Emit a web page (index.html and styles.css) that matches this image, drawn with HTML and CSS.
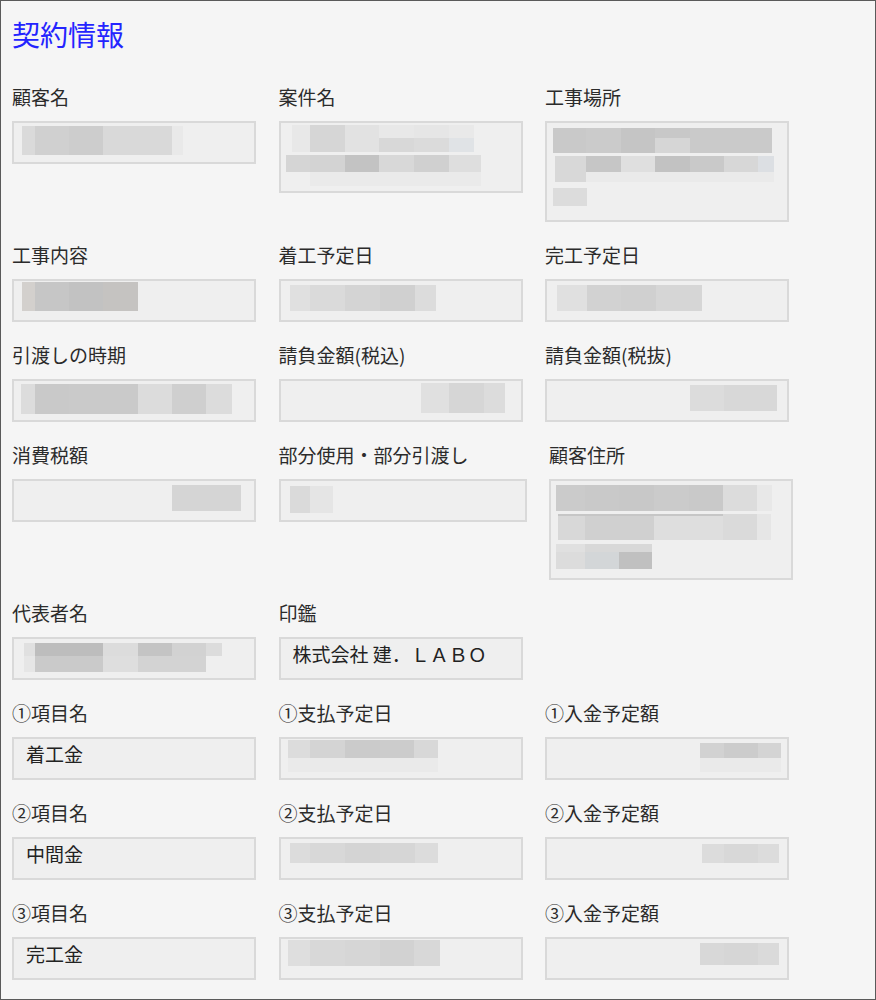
FILE: index.html
```html
<!DOCTYPE html>
<html lang="ja">
<head>
    <meta charset="UTF-8">
    <title>契約情報</title>
    <link rel="stylesheet" href="styles.css">
</head>
<body>
<div class="page">
    <h1 class="title">契約情報</h1>

    <div class="rows">
        <div class="row">
            <div class="field">
                <div class="label">顧客名</div>
                <div class="box">
                    <div class="mz blur-customer"></div>
                </div>
            </div>
            <div class="field">
                <div class="label">案件名</div>
                <div class="box mid">
                    <div class="mz blur-project-a"></div>
                    <div class="mz blur-project-b"></div>
                    <div class="mz blur-project-c"></div>
                </div>
            </div>
            <div class="field">
                <div class="label">工事場所</div>
                <div class="box tall">
                    <div class="mz blur-site-a"></div>
                    <div class="mz blur-site-b"></div>
                    <div class="mz blur-site-b2"></div>
                    <div class="mz blur-site-c"></div>
                </div>
            </div>
        </div>

        <div class="row">
            <div class="field">
                <div class="label">工事内容</div>
                <div class="box">
                    <div class="mz blur-work"></div>
                </div>
            </div>
            <div class="field">
                <div class="label">着工予定日</div>
                <div class="box">
                    <div class="mz blur-start"></div>
                </div>
            </div>
            <div class="field">
                <div class="label">完工予定日</div>
                <div class="box">
                    <div class="mz blur-finish"></div>
                </div>
            </div>
        </div>

        <div class="row">
            <div class="field">
                <div class="label">引渡しの時期</div>
                <div class="box">
                    <div class="mz blur-handover"></div>
                </div>
            </div>
            <div class="field">
                <div class="label">請負金額(税込)</div>
                <div class="box">
                    <div class="mz blur-total-in"></div>
                </div>
            </div>
            <div class="field">
                <div class="label">請負金額(税抜)</div>
                <div class="box">
                    <div class="mz blur-total-ex"></div>
                </div>
            </div>
        </div>

        <div class="row">
            <div class="field">
                <div class="label">消費税額</div>
                <div class="box">
                    <div class="mz blur-tax"></div>
                </div>
            </div>
            <div class="field wide">
                <div class="label">部分使用・部分引渡し</div>
                <div class="box">
                    <div class="mz blur-partial"></div>
                </div>
            </div>
            <div class="field">
                <div class="label">顧客住所</div>
                <div class="box tall">
                    <div class="mz blur-addr-a"></div>
                    <div class="mz blur-addr-b"></div>
                    <div class="mz blur-addr-c"></div>
                </div>
            </div>
        </div>

        <div class="row">
            <div class="field">
                <div class="label">代表者名</div>
                <div class="box">
                    <div class="mz blur-rep-a"></div>
                    <div class="mz blur-rep-b"></div>
                </div>
            </div>
            <div class="field">
                <div class="label">印鑑</div>
                <div class="box">
                    <div class="val">株式会社 建．ＬＡＢＯ</div>
                </div>
            </div>
        </div>

        <div class="row">
            <div class="field">
                <div class="label">①項目名</div>
                <div class="box">
                    <div class="val">着工金</div>
                </div>
            </div>
            <div class="field">
                <div class="label">①支払予定日</div>
                <div class="box">
                    <div class="mz blur-pay1-a"></div>
                    <div class="mz blur-pay1-b"></div>
                </div>
            </div>
            <div class="field">
                <div class="label">①入金予定額</div>
                <div class="box">
                    <div class="mz blur-amt1-a"></div>
                    <div class="mz blur-amt1-b"></div>
                </div>
            </div>
        </div>

        <div class="row">
            <div class="field">
                <div class="label">②項目名</div>
                <div class="box">
                    <div class="val">中間金</div>
                </div>
            </div>
            <div class="field">
                <div class="label">②支払予定日</div>
                <div class="box">
                    <div class="mz blur-pay2"></div>
                </div>
            </div>
            <div class="field">
                <div class="label">②入金予定額</div>
                <div class="box">
                    <div class="mz blur-amt2"></div>
                </div>
            </div>
        </div>

        <div class="row">
            <div class="field">
                <div class="label">③項目名</div>
                <div class="box">
                    <div class="val">完工金</div>
                </div>
            </div>
            <div class="field">
                <div class="label">③支払予定日</div>
                <div class="box">
                    <div class="mz blur-pay3"></div>
                </div>
            </div>
            <div class="field">
                <div class="label">③入金予定額</div>
                <div class="box">
                    <div class="mz blur-amt3"></div>
                </div>
            </div>
        </div>
    </div>
</div>
</body>
</html>
```

FILE: styles.css
```css
body {
    margin: 0;
    font-family: "Noto Sans CJK JP", "Noto Sans", sans-serif;
    color: #2b2b2b;
}
.page {
    box-sizing: border-box;
    width: 876px;
    height: 1000px;
    border: 1px solid #5a5a5a;
    background: #f5f5f5;
    padding: 15px 0 0 11px;
}
.title {
    margin: 0 0 33px;
    font-size: 28px;
    line-height: 36px;
    font-weight: normal;
    color: #2424ff;
}
.rows {
    display: flex;
    flex-direction: column;
    gap: 21px;
}
.row {
    display: flex;
    align-items: flex-start;
    gap: 22.5px;
}
.field {
    width: 244px;
}
.field.wide {
    width: 248px;
}
.label {
    font-size: 19px;
    line-height: 24px;
    margin-bottom: 12px;
    white-space: nowrap;
}
.box {
    box-sizing: border-box;
    height: 43px;
    border: 2px solid #d9d9d9;
    background: #efefef;
    overflow: hidden;
}
.box.mid {
    height: 72px;
}
.box.tall {
    height: 101px;
}
.val {
    padding: 3px 12px 0;
    font-size: 19px;
    line-height: 24px;
    color: #222;
    white-space: nowrap;
}

/* mosaic (blurred personal data) */
.mz {
    display: block;
}
.blur-customer {
    margin: 3px 0 0 8px; width: 161px; height: 29px;
    background: linear-gradient(90deg, #dadada 0 13px, #d0d0d0 13px 47px, #cdcdcd 47px 81px, #d9d9d9 81px 150px, #e9e9e9 150px 161px);
}
.blur-project-a {
    margin: 2px 0 0 11px; width: 182px; height: 27px;
    background:
        linear-gradient(90deg, #e8e8e8 0 18px, #d6d6d6 18px 53px, #e2e2e2 53px 87px, #e8e8e8 87px 122px, #e6e6e6 122px 157px, #e9e9e9 157px 182px) top / 100% 13px no-repeat,
        linear-gradient(90deg, #e8e8e8 0 18px, #d6d6d6 18px 53px, #e2e2e2 53px 87px, #d8d8d8 87px 122px, #dbdbdb 122px 157px, #e0e3e6 157px 182px);
}
.blur-project-b {
    margin: 3px 0 0 5px; width: 195px; height: 17px;
    background: linear-gradient(90deg, #d5d5d5 0 24px, #d3d3d3 24px 59px, #c3c3c3 59px 93px, #d8d8d8 93px 128px, #d0d0d0 128px 163px, #dedede 163px 195px);
}
.blur-project-c {
    margin-left: 29px; width: 171px; height: 14px;
    background: #eaeaea;
}
.blur-site-a {
    margin: 5px 0 0 6px; width: 219px; height: 25px;
    background:
        linear-gradient(90deg, #c9c9c9 0 33px, #cbcbcb 33px 68px, #c5c5c5 68px 102px, #c8c8c8 102px 137px, #cacaca 137px 219px) top / 100% 10px no-repeat,
        linear-gradient(90deg, #c9c9c9 0 33px, #cbcbcb 33px 68px, #c5c5c5 68px 102px, #d6d6d6 102px 137px, #cacaca 137px 219px);
}
.blur-site-b {
    margin: 3px 0 0 8px; width: 219px; height: 16px;
    background: linear-gradient(90deg, #d8d8d8 0 31px, #c6c6c6 31px 66px, #dfdfdf 66px 100px, #c2c2c2 100px 135px, #c9c9c9 135px 169px, #d7d7d7 169px 203px, #dcdfe3 203px 219px);
}
.blur-site-b2 {
    margin-left: 8px; width: 219px; height: 10px;
    background: linear-gradient(90deg, #d8d8d8 0 31px, #eaeaea 31px 219px);
}
.blur-site-c {
    margin: 6px 0 0 6px; width: 34px; height: 18px;
    background: #dcdcdc;
}
.blur-work {
    margin: 1px 0 0 8px; width: 116px; height: 29px;
    background: linear-gradient(90deg, #d3d0cd 0 13px, #c6c6c6 13px 47px, #c2c2c2 47px 81px, #c5c3c1 81px 116px);
}
.blur-start {
    margin: 4px 0 0 9px; width: 146px; height: 26px;
    background: linear-gradient(90deg, #e0e0e0 0 20px, #dadada 20px 55px, #d4d4d4 55px 90px, #d0d0d0 90px 125px, #dcdcdc 125px 146px);
}
.blur-finish {
    margin: 4px 0 0 10px; width: 145px; height: 26px;
    background: linear-gradient(90deg, #e0e0e0 0 30px, #d2d2d2 30px 64px, #d0d0d0 64px 99px, #d6d6d6 99px 145px);
}
.blur-handover {
    margin: 3px 0 0 7px; width: 211px; height: 30px;
    background: linear-gradient(90deg, #dcdcdc 0 14px, #c9c9c9 14px 48px, #cacaca 48px 117px, #dcdcdc 117px 151px, #cfcfcf 151px 185px, #dcdcdc 185px 211px);
}
.blur-total-in {
    margin: 2px 0 0 140px; width: 84px; height: 30px;
    background: linear-gradient(90deg, #e0e0e0 0 28px, #d6d6d6 28px 63px, #dcdcdc 63px 84px);
}
.blur-total-ex {
    margin: 4px 0 0 143px; width: 87px; height: 26px;
    background: linear-gradient(90deg, #dcdcdc 0 34px, #d8d8d8 34px 87px);
}
.blur-tax {
    margin: 4px 0 0 158px; width: 69px; height: 26px;
    background: #d5d5d5;
}
.blur-partial {
    margin: 5px 0 0 9px; width: 43px; height: 27px;
    background: linear-gradient(90deg, #dadada 0 20px, #e5e5e5 20px 43px);
}
.blur-addr-a {
    margin: 4px 0 0 5px; width: 216px; height: 26px;
    background: linear-gradient(90deg, #cbcbcb 0 29px, #c9c9c9 29px 63px, #c8c8c8 63px 98px, #cbcbcb 98px 133px, #c9c9c9 133px 167px, #dcdcdc 167px 201px, #e8e8e8 201px 216px);
}
.blur-addr-b {
    margin: 3px 0 0 7px; width: 213px; height: 26px;
    background:
        linear-gradient(90deg, #c6c6c6 0 165px, transparent 165px) top / 100% 2px no-repeat,
        linear-gradient(90deg, #d8d8d8 0 27px, #d0d0d0 27px 96px, #dedede 96px 165px, #dadada 165px 199px, #e6e6e6 199px 213px);
}
.blur-addr-c {
    margin: 4px 0 0 5px; width: 96px; height: 25px;
    background:
        linear-gradient(90deg, #e0e0e0 0 29px, #d8d8d8 29px 96px) top / 100% 8px no-repeat,
        linear-gradient(90deg, #dcdcdc 0 29px, #d3d6d8 29px 63px, #c0c0c0 63px 96px);
}
.blur-rep-a {
    margin: 4px 0 0 10px; width: 198px; height: 13px;
    background: linear-gradient(90deg, #e0e0e0 0 11px, #bdbdbd 11px 79px, #dcdcdc 79px 114px, #c4c4c4 114px 148px, #d2d2d2 148px 182px, #dcdcdc 182px 198px);
}
.blur-rep-b {
    margin-left: 10px; width: 182px; height: 16px;
    background: linear-gradient(90deg, #e6e6e6 0 11px, #cacaca 11px 79px, #dedede 79px 114px, #d3d3d3 114px 182px);
}
.blur-pay1-a {
    margin: 1px 0 0 7px; width: 150px; height: 18px;
    background: linear-gradient(90deg, #dcdcdc 0 22px, #d4d4d4 22px 57px, #cbcbcb 57px 92px, #cccccc 92px 126px, #d8d8d8 126px 150px);
}
.blur-pay1-b {
    margin-left: 7px; width: 150px; height: 14px;
    background: #eaeaea;
}
.blur-amt1-a {
    margin: 4px 0 0 153px; width: 81px; height: 15px;
    background: linear-gradient(90deg, #d2d2d2 0 24px, #cccccc 24px 58px, #d4d4d4 58px 81px);
}
.blur-amt1-b {
    margin-left: 153px; width: 81px; height: 14px;
    background: #eaeaea;
}
.blur-pay2 {
    margin: 4px 0 0 9px; width: 148px; height: 20px;
    background: linear-gradient(90deg, #dcdcdc 0 20px, #d8d8d8 20px 55px, #d4d4d4 55px 90px, #d6d6d6 90px 125px, #dcdcdc 125px 148px);
}
.blur-amt2 {
    margin: 5px 0 0 155px; width: 77px; height: 19px;
    background: linear-gradient(90deg, #dcdcdc 0 22px, #d8d8d8 22px 56px, #dcdcdc 56px 77px);
}
.blur-pay3 {
    margin: 1px 0 0 7px; width: 152px; height: 26px;
    background: linear-gradient(90deg, #dedede 0 22px, #d8d8d8 22px 57px, #d6d6d6 57px 92px, #d2d2d2 92px 126px, #d8d8d8 126px 152px);
}
.blur-amt3 {
    margin: 4px 0 0 153px; width: 79px; height: 22px;
    background: linear-gradient(90deg, #d8d8d8 0 24px, #d6d6d6 24px 58px, #dadada 58px 79px);
}
```
